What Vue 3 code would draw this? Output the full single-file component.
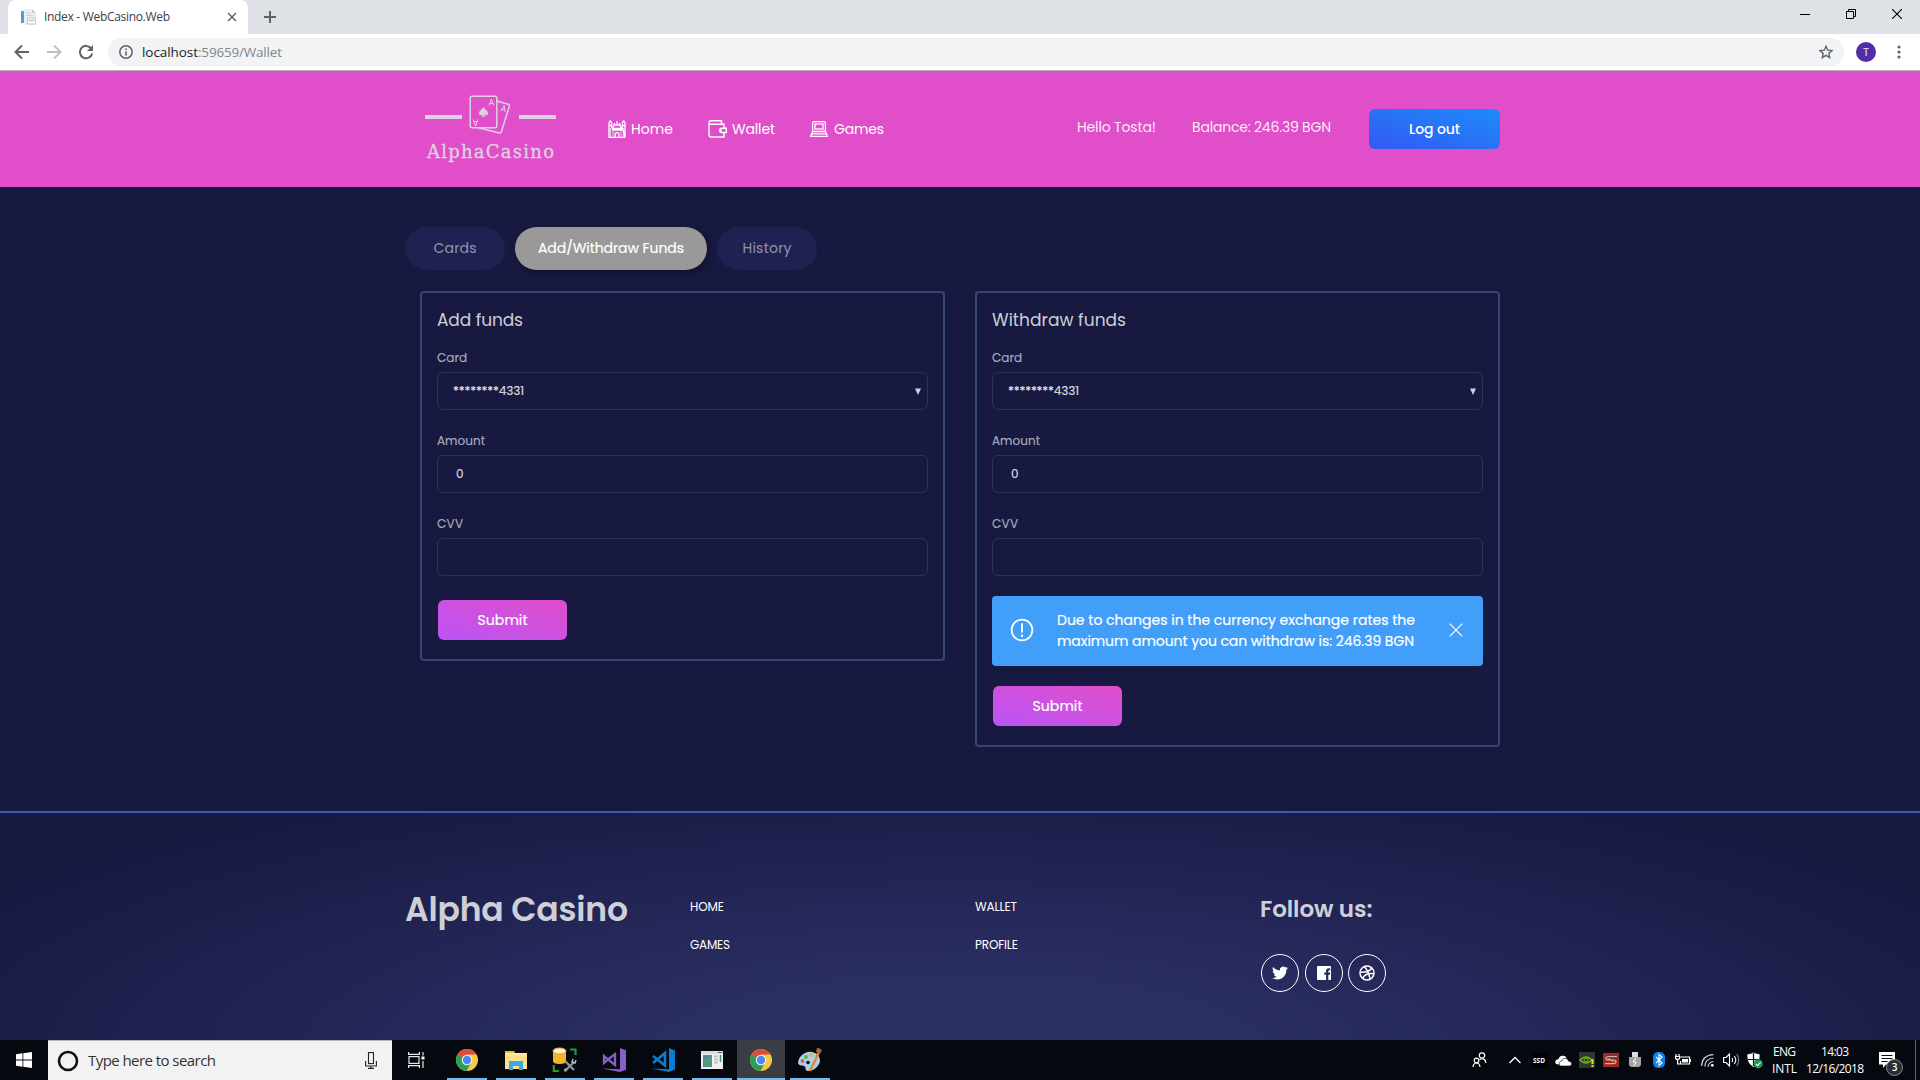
<script setup>
const forms = [
  { title: 'Add funds', width: 86, alert: null },
  {
    title: 'Withdraw funds',
    width: 134,
    alert: [
      { text: 'Due to changes in the currency exchange rates the', width: 358 },
      { text: 'maximum amount you can withdraw is: 246.39 BGN', width: 357 },
    ],
  },
]

const apps = ['chrome', 'explorer', 'sql', 'vs', 'vscode', 'window', 'chrome', 'paint']

// Tracks a label out (or in) so that it fills the given width.
const vFit = {
  mounted(el, { value }) {
    const gaps = el.textContent.length - 1
    const natural = el.getBoundingClientRect().width
    el.style.letterSpacing = `${(value - natural) / gaps}px`
    el.style.width = `${value}px`
  },
}
</script>

<template>
  <div class="screen">
    <div class="tabstrip">
      <div class="tab">
        <svg class="favicon" width="16" height="16" viewBox="0 0 16 16">
          <path d="M4 0h8l4 4v12H4z" fill="#eceef0" />
          <path d="M12 0l4 4h-4z" fill="#c9cdd2" />
          <rect x="1" y="2" width="3" height="12" fill="#4f9fd0" />
          <path d="M6 4h5M6 6.500h7" stroke="#cdd2d8" />
          <rect x="7.500" y="9" width="8" height="6" fill="#fafafa" stroke="#c3c7cc" />
          <path d="M9 11.500h5" stroke="#b4b9bf" />
        </svg>
        <span class="tab-title" v-fit="126">Index - WebCasino.Web</span>
        <svg class="tab-close" width="10" height="10" viewBox="0 0 10 10"><path d="M1 1l8 8M9 1l-8 8" stroke="#5f6368" stroke-width="1.500" /></svg>
      </div>
      <svg class="tab-new" width="12" height="12" viewBox="0 0 12 12"><path d="M6 0v12M0 6h12" stroke="#5f6368" stroke-width="2" /></svg>
      <div class="win-buttons">
        <svg width="10" height="10" viewBox="0 0 10 10"><path d="M0 5.500h10" stroke="#000" /></svg>
        <svg width="10" height="10" viewBox="0 0 10 10"><path d="M.5 2.500h7v7h-7zM2.500 2.500v-2h7v7h-2" fill="none" stroke="#000" /></svg>
        <svg width="10" height="10" viewBox="0 0 10 10"><path d="M0 0l10 10M10 0L0 10" stroke="#000" stroke-width="1.100" /></svg>
      </div>
    </div>

    <div class="toolbar">
      <svg class="nav-btn" width="16" height="16" viewBox="0 0 16 16"><path d="M15 8H2M8 1.500L1.500 8 8 14.500" fill="none" stroke="#5f6368" stroke-width="2" /></svg>
      <svg class="nav-btn" width="16" height="16" viewBox="0 0 16 16"><path d="M1 8h13M8 1.500L14.500 8 8 14.500" fill="none" stroke="#bdc0c3" stroke-width="2" /></svg>
      <svg class="nav-btn" width="16" height="16" viewBox="0 0 16 16">
        <path d="M13.300 4.600A6.200 6.200 0 1 0 14.200 9.500" fill="none" stroke="#5f6368" stroke-width="2" />
        <path d="M15 1v6H9z" fill="#5f6368" />
      </svg>
      <div class="omnibox">
        <svg width="14" height="14" viewBox="0 0 14 14">
          <circle cx="7" cy="7" r="6.200" fill="none" stroke="#5f6368" stroke-width="1.500" />
          <path d="M7 6.200v4.300M7 3.500v1.600" stroke="#5f6368" stroke-width="1.600" />
        </svg>
        <span class="url-host" v-fit="56">localhost</span><span class="url-path" v-fit="84">:59659/Wallet</span>
        <svg class="star" width="14" height="14" viewBox="0 0 14 14"><path d="M7 1.300l1.700 3.900 4.300.4-3.200 2.800.9 4.200L7 10.400l-3.700 2.200.9-4.200L1 5.600l4.300-.4z" fill="none" stroke="#5f6368" stroke-width="1.400" /></svg>
      </div>
      <span class="avatar">T</span>
      <svg class="menu-dots" width="4" height="14" viewBox="0 0 4 14"><g fill="#5f6368"><circle cx="2" cy="2" r="1.600" /><circle cx="2" cy="7" r="1.600" /><circle cx="2" cy="12" r="1.600" /></g></svg>
    </div>

    <header class="site-header">
      <div class="logo">
        <svg width="131" height="42" viewBox="0 0 131 42">
          <path d="M0 22h37M94 22h37" stroke="#ddd3e0" stroke-width="4" />
          <g fill="none" stroke="#ddd3e0" stroke-width="1.500" stroke-linejoin="round">
            <rect x="45.200" y="1.200" width="26.600" height="31.500" rx="2" />
            <path d="M72 6l11.200 3.200q1.600.5 1.200 2L76.300 37q-.5 1.400-2 1L53.500 32.800" />
            <g stroke-width="1">
              <path d="M64 10.500l2.400-6.500 2.400 6.500M64.800 8.500h3.200" />
              <path d="M53 24.500l-2.400 6.500-2.400-6.500M52.200 26.500h-3.200" />
              <path d="M75.500 16l3.700-5.500.9 6.600M76.800 14.200l3 .8" />
            </g>
          </g>
          <path d="M58.500 12c1 2 4.500 3.700 4.500 6.200 0 2.200-2.600 2.800-3.700 1.300l.5 2.500h-2.600l.5-2.500c-1.100 1.500-3.700.9-3.700-1.300 0-2.500 3.500-4.200 4.500-6.200z" fill="#ddd3e0" />
        </svg>
        <span class="logo-name" v-fit="127">AlphaCasino</span>
      </div>
      <nav class="main-nav">
        <a class="nav-home">
          <svg width="18" height="18" viewBox="0 0 18 18" fill="none" stroke="#fff" stroke-width="1.300">
            <path d="M1 17.300V3l1.300-2.300L3.700 3v5M14.300 8V3l1.400-2.300L17 3v14.300zM.500 17.300h17M1 5.500h3M14 5.500h3" />
            <path d="M4.500 8.500L6 5h6l1.500 3.500zM9 5V1M6.500 5V3M11.500 5V3M4 10h10M7.200 17v-3.500q1.800-1.800 3.600 0V17" />
            <path d="M5 11v6M13 11v6M2.500 8v9M15.500 8v9" stroke-width=".7" />
          </svg>
          <span v-fit="42">Home</span>
        </a>
        <a class="nav-wallet">
          <svg width="19" height="18" viewBox="0 0 19 18" fill="none" stroke="#fff" stroke-width="1.400">
            <path d="M1 3v11.500Q1 17 3.500 17H16v-4.500M16 8V4.200H2.500Q1 4.200 1 2.600 1 .800 2.800.800h10.700v3.400" />
            <path d="M18.300 8.200h-4.500a2.100 2.100 0 0 0 0 4.300h4.500zM12 10.300h2" />
          </svg>
          <span v-fit="43">Wallet</span>
        </a>
        <a class="nav-games">
          <svg width="18" height="18" viewBox="0 0 18 18" fill="none" stroke="#fff" stroke-width="1.300">
            <rect x="2.600" y="1.700" width="12.800" height="9.800" rx="1.200" />
            <rect x="5" y="4" width="8" height="5" />
            <path d="M2.500 11.500L.700 16.300h16.600l-1.800-4.800M2 13.900h14" />
          </svg>
          <span v-fit="50">Games</span>
        </a>
      </nav>
      <span class="hello"><span v-fit="79">Hello Tosta!</span></span>
      <span class="balance"><span v-fit="139">Balance: 246.39 BGN</span></span>
      <button class="btn btn-info"><span v-fit="51">Log out</span></button>
    </header>

    <main>
      <div class="pills">
        <a class="pill"><span v-fit="43">Cards</span></a>
        <a class="pill active"><span v-fit="146">Add/Withdraw Funds</span></a>
        <a class="pill"><span v-fit="49">History</span></a>
      </div>
      <div class="forms">
        <section v-for="form in forms" :key="form.title" class="box">
          <h4><span v-fit="form.width">{{ form.title }}</span></h4>
          <label><span v-fit="30">Card</span></label>
          <div class="field">
            <span v-fit="71">********4331</span>
            <svg class="arrow" width="6" height="7" viewBox="0 0 6 7"><path d="M0 .500h6L3 7z" fill="#d1d1d9" /></svg>
          </div>
          <label><span v-fit="48">Amount</span></label>
          <div class="field amount"><span>0</span></div>
          <label><span v-fit="26">CVV</span></label>
          <div class="field"></div>
          <div v-if="form.alert" class="alert">
            <svg width="24" height="24" viewBox="0 0 24 24" fill="none" stroke="#fff">
              <circle cx="12" cy="12" r="10.400" stroke-width="1.700" />
              <path d="M12 5.200v9.300M12 16.500v2.400" stroke-width="1.800" />
            </svg>
            <p><span v-for="line in form.alert" :key="line.text" v-fit="line.width">{{ line.text }}</span></p>
            <svg width="14" height="14" viewBox="0 0 14 14"><path d="M.700.700l12.600 12.600M13.300.700L.700 13.300" stroke="#fff" stroke-width="1.200" /></svg>
          </div>
          <button class="btn btn-primary" :class="{ 'after-alert': form.alert }"><span v-fit="50">Submit</span></button>
        </section>
      </div>
    </main>

    <footer>
      <h1><span v-fit="223">Alpha Casino</span></h1>
      <ul>
        <li><span v-fit="34">HOME</span></li>
        <li><span v-fit="40">GAMES</span></li>
      </ul>
      <ul>
        <li><span v-fit="42">WALLET</span></li>
        <li><span v-fit="43">PROFILE</span></li>
      </ul>
      <div>
        <h3><span v-fit="112.5">Follow us:</span></h3>
        <div class="social">
          <a>
            <svg width="16" height="16" viewBox="0 0 24 24"><path fill="#fff" d="M23.950 4.570a10 10 0 0 1-2.820.770 4.960 4.960 0 0 0 2.160-2.720c-.950.550-2 .950-3.130 1.180a4.920 4.920 0 0 0-8.380 4.480C7.690 8.090 4.070 6.130 1.640 3.160a4.820 4.820 0 0 0-.670 2.480c0 1.710.870 3.210 2.190 4.100a4.900 4.900 0 0 1-2.230-.620v.060a4.920 4.920 0 0 0 3.950 4.830 5 5 0 0 1-2.210.080 4.940 4.940 0 0 0 4.600 3.420A9.870 9.870 0 0 1 0 19.540a14 14 0 0 0 7.550 2.210c9.050 0 14-7.500 14-13.980 0-.210 0-.420-.020-.630a9.940 9.940 0 0 0 2.460-2.550z" /></svg>
          </a>
          <a>
            <svg width="14" height="14" viewBox="0 0 14 14"><path fill="#fff" fill-rule="evenodd" d="M1 0h12q1 0 1 1v12q0 1-1 1h-1.700V8.700h1.600l.3-2.100h-1.900V5.300q0-1 1-1h1V2.400q-4.200-.8-4.200 2.500v1.700H7.300v2.100h1.800V14H1q-1 0-1-1V1q0-1 1-1z" /></svg>
          </a>
          <a>
            <svg width="16" height="16" viewBox="0 0 16 16" fill="none" stroke="#fff" stroke-width="1.500">
              <circle cx="8" cy="8" r="7" />
              <path d="M5.500 1.500Q10.500 8 11 14.500M1 7.300q8.500.5 12-4.300M3.500 13.300Q7 7 15 8.800" />
            </svg>
          </a>
        </div>
      </div>
    </footer>

    <div class="taskbar">
      <div class="start">
        <svg width="16" height="16" viewBox="0 0 16 16"><path fill="#fff" d="M0 2.300L6.500 1.300v6.200H0zM7.300 1.200L16 0v7.500H7.300zM0 8.400h6.500v6.300L0 13.700zM7.300 8.400H16V16l-8.700-1.200z" /></svg>
      </div>
      <div class="search">
        <svg width="22" height="22" viewBox="0 0 22 22"><circle cx="11" cy="11" r="9" fill="none" stroke="#111" stroke-width="2.600" /></svg>
        <span v-fit="128">Type here to search</span>
        <svg class="mic" width="12" height="17" viewBox="0 0 12 17" fill="none" stroke="#222" stroke-width="1.100"><rect x="3.500" y=".6" width="5" height="11" /><path d="M.6 9v5h10.800V9M6 14v2.500M3 16.400h6" /></svg>
      </div>
      <div class="taskview">
        <svg width="17" height="16" viewBox="0 0 17 16" fill="none" stroke="#e8e8ea" stroke-width="1.200"><rect x="1" y="4.600" width="10" height="6.800" /><path d="M.6 0v2.400h10.800V0M.6 16v-2.400h10.800V16M15 0v3.500M15 9v7" /><path d="M13.500 4.500h3v3h-3z" fill="#fff" stroke="none" /></svg>
      </div>
      <div class="apps">
        <div v-for="(app, i) in apps" :key="i" class="app" :class="{ current: i === 6 }">
          <svg v-if="app === 'chrome'" width="24" height="24" viewBox="0 0 24 24">
            <circle cx="12" cy="12" r="11" fill="#fbc93f" />
            <path d="M12 12L2.500 6.500A11 11 0 0 1 21.500 6.500H12z" fill="#dd4b3e" />
            <path d="M2.500 6.500A11 11 0 0 0 11.500 23l4.800-8.500L12 12z" fill="#2a9d5a" />
            <circle cx="12" cy="12" r="5.300" fill="#f3f3f3" /><circle cx="12" cy="12" r="4.200" fill="#4a8af4" />
          </svg>
          <svg v-else-if="app === 'explorer'" width="24" height="24" viewBox="0 0 24 24">
            <path d="M1 3h9l1 2h12v16H1z" fill="#fce08b" /><path d="M1 3h9v2H1z" fill="#f2b92d" /><path d="M2 6h20" stroke="#fff0b5" />
            <path d="M5 22v-9h14v9h-4v-4H9v4z" fill="#38a8e8" />
          </svg>
          <svg v-else-if="app === 'sql'" width="26" height="26" viewBox="0 0 26 26">
            <path d="M1 4v10q0 3 6.500 3T14 14V4z" fill="#f2b52c" /><ellipse cx="7.500" cy="4" rx="6.500" ry="3" fill="#fff3d0" stroke="#eaa91d" />
            <path d="M18 2.500h5.500V8M1.800 18v6H7" fill="none" stroke="#2f9440" stroke-width="2.200" />
            <path d="M13 14l9 9M22 15l-9 9" stroke="#8f969c" stroke-width="2.200" /><path d="M21 12l-1 3 3 1 1-3" stroke="#b3b9bd" fill="none" stroke-width="1.500" /><circle cx="13.500" cy="23" r="1.700" fill="#9aa0a5" />
          </svg>
          <svg v-else-if="app === 'vs'" width="24" height="24" viewBox="0 0 24 24">
            <path d="M18 0l6 2.300v19.500L18 24 0 20.500l18 .7z" fill="#8661c5" /><path d="M2 8v7l4-3.500zM6 11.500L13 6v11z" fill="none" stroke="#8661c5" stroke-width="2.300" />
          </svg>
          <svg v-else-if="app === 'vscode'" width="24" height="24" viewBox="0 0 24 24">
            <path d="M18 0l6 2.500v19L18 24 0 20.500l18 .7z" fill="#0b7cd0" /><path d="M2 8l12 9.500V5L2 15" fill="none" stroke="#0b7cd0" stroke-width="2.600" />
          </svg>
          <svg v-else-if="app === 'window'" width="22" height="20" viewBox="0 0 22 20">
            <path d="M0 1h22v18H0z" fill="#eef0f1" /><path d="M0 1h22v3H0z" fill="#d9dcde" /><path d="M2 5h9v12H2z" fill="#4d8c9b" /><path d="M3 10l8-4v10H3z" fill="#5fa06f" opacity=".7" />
            <path d="M13 6.500h4M13 9.500h4M13 12.500h4" stroke="#bfc4c7" stroke-width="2" /><path d="M19.500 5v7" stroke="#4d8c75" stroke-width="1.500" /><path d="M17 2.500h4" stroke="#54606c" />
          </svg>
          <svg v-else width="26" height="26" viewBox="0 0 26 26">
            <path d="M1 16C2 8 9 4 15 5c5 1 8 4 8 9-1 6-7 10-12 10-4 0-1-4-4-5s-5 0-6-3z" fill="#a9d3e8" />
            <circle cx="5.500" cy="14" r="1.900" fill="#e2574c" /><circle cx="9" cy="10" r="1.900" fill="#54b04a" /><circle cx="14" cy="8" r="1.900" fill="#f3b32b" /><circle cx="11" cy="15.500" r="1.800" fill="#07121f" />
            <path d="M23 3L13 24" stroke="#dc8a3c" stroke-width="2.500" /><path d="M20 1q4 0 5 3l-3 3-3-2z" fill="#a3673b" />
          </svg>
        </div>
      </div>
      <div class="tray">
        <svg width="15" height="16" viewBox="0 0 15 16" fill="none" stroke="#fff" stroke-width="1.200"><circle cx="10" cy="3.500" r="2.700" /><circle cx="4.500" cy="8.500" r="2.300" /><path d="M1 15q.5-4 3.500-4t3.500 4M7.500 7.500Q13 5 14 11" /></svg>
        <svg class="caret" width="12" height="8" viewBox="0 0 12 8"><path d="M.500 7L6 1.500 11.500 7" fill="none" stroke="#fff" stroke-width="1.300" /></svg>
        <span class="ssd">SSD</span>
        <svg width="17" height="11" viewBox="0 0 17 11"><path d="M3.500 9.500Q0 9.500.200 6.500 1 4 3.500 4.200 4.500 0 8.500.800q2.500.4 3 2" fill="#fff" /><path d="M6 11q-2.500-.5-2-3 .6-2 2.800-2Q7.500 3 10.500 3.300q2.600.3 3.100 3 3 0 3.100 2.600-.3 2.100-2.500 2.100z" fill="#fff" stroke="#05080f" stroke-width=".6" /></svg>
        <svg width="16" height="16" viewBox="0 0 16 16"><path d="M0 0h16v16H0z" fill="#2b3836" /><path d="M1 8q6-6 12 0-6 6-12 0z" fill="none" stroke="#77b900" stroke-width="1.500" /><circle cx="7" cy="8" r="2" fill="none" stroke="#77b900" /><path d="M13.500 7v5M13.500 13v2" stroke="#ffd21e" stroke-width="2" /></svg>
        <svg width="16" height="14" viewBox="0 0 16 14"><path d="M0 0h16v14H0z" fill="#9c2a22" /><path d="M14 3.500H6.500q-3.500 0-3.500 1.800T6 7h4q3 0 3 1.800t-3 1.800H2M5.500 5.500l5 3" fill="none" stroke="#c9b9b4" stroke-width="1.200" /></svg>
        <svg width="12" height="16" viewBox="0 0 12 16"><path d="M3 0h6v5H3z" fill="#dcdcdc" /><path d="M0 5h12v7q0 3-3 3H3q-3 0-3-3z" fill="#a5a5a5" /><path d="M7 6l-3 4h3l-2 4" fill="none" stroke="#fff" /></svg>
        <svg width="12" height="16" viewBox="0 0 12 16"><rect width="12" height="16" rx="5" fill="#0a84ee" /><path d="M3 5l6 6-3 2.500v-11L9 5l-6 6" fill="none" stroke="#fff" stroke-width="1.100" /></svg>
        <svg width="16" height="12" viewBox="0 0 16 12" fill="none" stroke="#fff" stroke-width="1.200"><path d="M5.500 3h9v7h-9V7M1 0v2M4 0v2M.600 2.500h4v2q-2 2-4 0zM2.600 6v4H5M15.500 5v3" /><path d="M7 5h6v3.500H7z" fill="#fff" stroke="none" /></svg>
        <svg width="13" height="13" viewBox="0 0 13 13" fill="none" stroke="#c5c7ca" stroke-width="1.200"><path d="M.600 12Q1 1 12.500.600M3.800 12.500Q4 5 12.500 4M7 12.800Q7.500 8 12.500 7.500" /><circle cx="11.300" cy="11.300" r="1.400" fill="#fff" stroke="none" /></svg>
        <svg width="17" height="14" viewBox="0 0 17 14" fill="none" stroke="#fff" stroke-width="1.100"><path d="M.600 4.500h2.500L6.500 1v12L3.100 9.500H.600zM9 5q1.300 2 0 4M11.300 3q3 4 0 8" /><path d="M13.700 1q4 6 0 12" opacity=".5" /></svg>
        <svg width="16" height="17" viewBox="0 0 16 17"><path d="M6.500.500Q9 2.200 12.500 2.200 13.500 11 6.500 15-.500 11 .500 2.200 4 2.200 6.500.500z" fill="#fff" /><path d="M6.500 1v13M1 7.500h11" stroke="#05080f" stroke-width="1.200" /><circle cx="11.200" cy="11.800" r="4.600" fill="#169b52" /><path d="M9 12l1.600 1.600 3-3.200" fill="none" stroke="#fff" stroke-width="1.200" /></svg>
        <div class="lang"><span v-fit="23">ENG</span><span v-fit="25">INTL</span></div>
        <div class="clock"><span v-fit="28">14:03</span><span v-fit="58">12/16/2018</span></div>
        <div class="action">
          <svg width="16" height="16" viewBox="0 0 16 16"><path d="M0 0h16v12.500H7L4 16v-3.500H0z" fill="#fff" /><path d="M2.500 3.500h11M2.500 6.500h11M2.500 9.500h6" stroke="#05080f" /></svg>
          <span class="badge">3</span>
        </div>
      </div>
    </div>
  </div>
</template>

<style>
body {
  overflow: hidden;
}
</style>

<style scoped>
.screen {
  width: 1920px;
  height: 1080px;
  display: flex;
  flex-direction: column;
  background: #171941;
  font-family: Poppins, Inter, sans-serif;
  color: rgba(255, 255, 255, 0.8);
  overflow: hidden;
}
.screen * {
  box-sizing: border-box;
}
.screen svg {
  flex: none;
  display: block;
}
.screen span {
  display: inline-block;
  white-space: nowrap;
}
.tabstrip {
  height: 34px;
  background: #dee1e6;
  display: flex;
  align-items: center;
  padding-left: 8px;
  font-family: 'Open Sans', sans-serif;
}
.tab {
  width: 240px;
  height: 34px;
  background: #fff;
  border-radius: 8px 8px 0 0;
  display: flex;
  align-items: center;
  padding: 0 11px 0 12px;
}
.tab-title {
  margin: -1px 0 0 8px;
  font-size: 12px;
  color: #3c4043;
}
.tab-close {
  margin-left: auto;
}
.tab-new {
  margin-left: 16px;
}
.win-buttons {
  margin-left: auto;
  display: flex;
  gap: 36px;
  padding: 0 18px 6px 0;
}
.toolbar {
  height: 37px;
  background: #fff;
  border-bottom: 1px solid #b6b4b6;
  display: flex;
  align-items: center;
  padding-left: 14px;
  font-family: 'Open Sans', sans-serif;
}
.nav-btn {
  margin-right: 16px;
}
.omnibox {
  width: 1736px;
  height: 28px;
  margin-left: -2px;
  border-radius: 14px;
  background: #f1f3f4;
  display: flex;
  align-items: center;
  padding: 0 11px;
  font-size: 13.500px;
}
.url-host {
  margin-left: 9px;
  color: #202124;
}
.url-path {
  color: #80868b;
}
.star {
  margin-left: auto;
}
.avatar {
  width: 20px;
  height: 20px;
  margin-left: 12px;
  border-radius: 50%;
  background: #512da8;
  color: #d9cdf0;
  font-size: 10px;
  font-weight: 600;
  line-height: 20px;
  text-align: center;
}
.menu-dots {
  margin-left: 21px;
}
.site-header {
  height: 116px;
  background: #e14eca;
  display: flex;
  align-items: center;
  padding-left: 425px;
  font-size: 14px;
  color: #fff;
}
.logo {
  width: 131px;
  height: 74px;
  margin-top: 6px;
  display: flex;
  flex-direction: column;
  align-items: center;
}
.logo-name {
  margin-top: 2px;
  font-family: 'DejaVu Serif', serif;
  font-size: 18px;
  line-height: 25px;
  color: #ddd3e0;
  -webkit-text-stroke: 0.3px #ddd3e0;
}
.main-nav {
  display: flex;
  align-items: center;
  margin-left: 52px;
}
.main-nav a {
  display: flex;
  align-items: center;
  gap: 5px;
  height: 20px;
}
.main-nav .nav-wallet {
  margin-left: 35px;
}
.main-nav .nav-games {
  margin-left: 35px;
  gap: 6px;
}
.hello,
.balance {
  color: rgba(255, 255, 255, 0.9);
  line-height: 20px;
  margin: 0 0 4px 193px;
}
.balance {
  margin-left: 36px;
}
.btn {
  display: flex;
  align-items: center;
  justify-content: center;
  height: 40px;
  border: 0;
  padding: 0;
  border-radius: 6px;
  font: 500 14px Poppins, Inter, sans-serif;
  color: #fff;
}
.btn-info {
  width: 131px;
  margin-left: 38px;
  background: linear-gradient(to bottom left, #1d8cf8, #3358f4);
}
main {
  height: 624px;
  padding: 40px 405px 0;
}
.pills {
  display: flex;
  gap: 10px;
}
.pill {
  width: 100px;
  height: 43px;
  border-radius: 22px;
  background: #1f2251;
  display: flex;
  align-items: center;
  justify-content: center;
  font-size: 14px;
  color: rgba(255, 255, 255, 0.52);
}
.pill.active {
  width: 192px;
  background: #999;
  color: #fff;
  box-shadow: 2px 2px 6px rgba(0, 0, 0, 0.4);
  -webkit-text-stroke: 0.2px #fff;
}
.forms {
  display: flex;
  align-items: flex-start;
  gap: 30px;
  padding: 21px 15px 0;
}
.box {
  width: 525px;
  border: 2px solid #344675;
  border-radius: 4px;
  padding: 15px 15px 19px;
}
h4 {
  margin: 0 0 17px;
  font-size: 17px;
  font-weight: 400;
  line-height: 24px;
}
label {
  display: block;
  height: 18px;
  margin-bottom: 5px;
  font-size: 12px;
  line-height: 18px;
  color: rgba(255, 255, 255, 0.6);
  -webkit-text-stroke: 0.15px rgba(255, 255, 255, 0.6);
}
.field + label {
  margin-top: 22px;
}
.field {
  height: 38px;
  border: 1px solid #2b3553;
  border-radius: 6px;
  display: flex;
  align-items: center;
  padding: 0 6px 0 15px;
  font-size: 12px;
  -webkit-text-stroke: 0.2px rgba(255, 255, 255, 0.8);
}
.amount {
  padding-left: 18px;
}
.arrow {
  margin-left: auto;
}
.alert {
  height: 70px;
  margin-top: 20px;
  border-radius: 4px;
  background: #419ef9;
  color: #fff;
  display: flex;
  align-items: center;
  padding: 0 20px 2px 18px;
}
.alert p {
  margin: 0 auto 0 23px;
  width: 358px;
  padding-top: 2px;
  font-size: 14px;
  line-height: 21px;
  -webkit-text-stroke: 0.2px #fff;
}
.alert p span {
  display: block;
}
.screen .alert p span {
  width: max-content;
}
.btn-primary {
  width: 129px;
  margin: 24px 0 0 1px;
  background: linear-gradient(to bottom left, #e14eca, #ba54f5);
  font-weight: 400;
  -webkit-text-stroke: 0.2px #fff;
}
.btn-primary.after-alert {
  margin-top: 20px;
}
footer {
  height: 229px;
  border-top: 2px solid #3e59b0;
  background: radial-gradient(ellipse 60% 130% at 50% 105%, #2b2e63 25%, #171941 100%);
  display: grid;
  grid-template-columns: repeat(4, 285px);
  padding-left: 405px;
}
h1 {
  margin: 77px 0 0;
  font-size: 33px;
  font-weight: 600;
  line-height: 40px;
}
ul {
  list-style: none;
  margin: 85px 0 0;
  padding: 0;
  font-size: 12px;
  color: #fff;
}
li {
  height: 38px;
  line-height: 18px;
}
h3 {
  margin: 81px 0 0;
  font-size: 23px;
  font-weight: 600;
  line-height: 30px;
}
.social {
  display: flex;
  gap: 5.500px;
  margin: 30px 0 0 1px;
}
.social a {
  width: 38px;
  height: 38px;
  border: 1px solid #fff;
  border-radius: 50%;
  display: flex;
  align-items: center;
  justify-content: center;
}
.taskbar {
  height: 40px;
  background: #05080f;
  display: flex;
  font-family: 'Open Sans', sans-serif;
  color: #fff;
}
.start,
.taskview {
  width: 48px;
  display: flex;
  align-items: center;
  justify-content: center;
}
.search {
  width: 344px;
  background: #f2f2f2;
  border-top: 1px solid #b9b2b9;
  display: flex;
  align-items: center;
  padding: 0 15px 0 9px;
  font-size: 15px;
  color: #333;
}
.search span {
  margin: -2px 0 0 9px;
}
.mic {
  margin-left: auto;
}
.apps {
  display: flex;
  gap: 1px;
  margin-left: 3px;
}
.app {
  width: 48px;
  height: 40px;
  display: flex;
  align-items: center;
  justify-content: center;
  background: linear-gradient(#76b9ed, #76b9ed) center bottom / 40px 2px no-repeat;
}
.app.current {
  background: linear-gradient(#76b9ed, #76b9ed) center bottom / 48px 2px no-repeat #3a3e44;
}
.tray {
  margin-left: auto;
  display: grid;
  grid-template-columns: 24px 36px repeat(10, 24px) 35px 66px 52px;
  align-items: center;
  justify-items: center;
}
.caret {
  margin-left: 12px;
}
.ssd {
  width: 15px;
  height: 15px;
  background: #000;
  font-size: 6.500px;
  font-weight: 700;
  line-height: 16px;
  text-align: center;
}
.lang,
.clock {
  display: flex;
  flex-direction: column;
  align-items: center;
  font-size: 12px;
  line-height: 17px;
  padding-bottom: 1px;
}
.action {
  position: relative;
  height: 16px;
  justify-self: start;
  margin-left: 11px;
}
.badge {
  position: absolute;
  left: 7px;
  top: 7px;
  width: 17px;
  height: 17px;
  border: 1px solid #8a8d90;
  border-radius: 50%;
  background: #2b2e33;
  font-size: 10px;
  font-weight: 600;
  line-height: 15px;
  text-align: center;
}
.action::after {
  content: '';
  position: absolute;
  left: 36px;
  top: -12px;
  width: 1px;
  height: 40px;
  background: #63666b;
}
</style>
